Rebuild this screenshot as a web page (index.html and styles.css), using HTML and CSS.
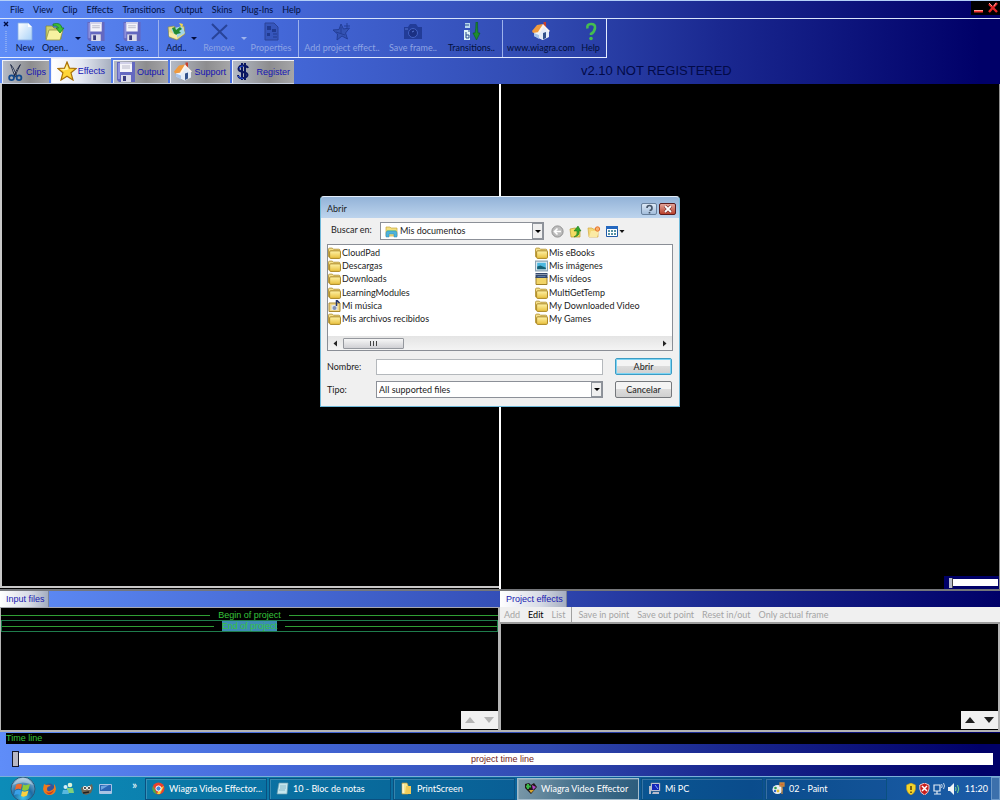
FILE: index.html
```html
<!DOCTYPE html>
<html lang="en">
<head>
<meta charset="utf-8">
<title>Wiagra Video Effector</title>
<link rel="stylesheet" href="styles.css">
</head>
<body>
<svg class="defs" aria-hidden="true">
  <defs>
    <linearGradient id="gFolder" x1="0" y1="0" x2="0" y2="1"><stop offset="0" stop-color="#fff3a8"/><stop offset="1" stop-color="#e8bf3c"/></linearGradient>
    <linearGradient id="gPage" x1="0" y1="0" x2="1" y2="1"><stop offset="0" stop-color="#fff"/><stop offset="1" stop-color="#a9d2f8"/></linearGradient>
    <radialGradient id="gOrb" cx=".5" cy=".85" r=".8"><stop offset="0" stop-color="#3fc3ee"/><stop offset=".5" stop-color="#1c6ba4"/><stop offset="1" stop-color="#8fb6d0"/></radialGradient>
  </defs>
  <symbol id="folder" viewBox="0 0 12 11"><path d="M.5 9V2q0-1 1-1H4l1 1h5q1 0 1 1v6z" fill="#f5e08a" stroke="#b08f2c" stroke-width=".8"/><path d="M2.500 3.500h8q1 0 1 1v5q0 1-1 1h-8q-1 0-1-1v-5q0-1 1-1z" fill="url(#gFolder)" stroke="#a98522" stroke-width=".9"/></symbol>
  <symbol id="floppy" viewBox="0 0 18 20"><path d="M0 0h18v20H2l-2-2z" fill="#6468c0"/><path d="M1 1h2v16H1z" fill="#8c90dc"/><path d="M3 0h12v10H3z" fill="#f4f4fa"/><path d="M3 0h12v2H3z" fill="#d0d0e8"/><path d="M5 4h8M5 6h8" stroke="#b8b8c8"/><path d="M4 13h10v7H4z" fill="#dcdce8"/><path d="M6 14h3v5H6z" fill="#3a3c80"/></symbol>
  <symbol id="house" viewBox="0 0 18 19"><path d="M11.500 0H14v6h-2.500z" fill="#c8402c"/><path d="M2 9l5-5 4 5v9l-9-4z" fill="#eef3fb"/><path d="M0 9l5-6 6-1-4 8-6 1z" fill="#f09a3e"/><path d="M7 10l5-6 5 5v6l-6 3-4-2z" fill="#e4ecf8"/><path d="M11 2l7 7-1.500 1L12 5l-4.500 6L6 10z" fill="#fdf4ea"/><path d="M11 11l3-1v6l-3 1.500z" fill="#33528c"/><path d="M2 11l5 2v4l-5-3z" fill="#a9c4ea"/></symbol>
  <symbol id="star" viewBox="0 0 20 20"><path d="M10 1l2.500 6.200 6.700.3-5.200 4.300L16 19l-6-3.800L4 19l1.900-7.200L.8 7.500l6.700-.3z" fill="#ffd637" stroke="#a87008" stroke-width="1.200"/><path d="M10 3.500l1.500 5-5 1-3.500-1.200 5-.3z" fill="#fff3a0"/></symbol>
</svg>

<div class="app">
  <header class="head">
    <nav class="menubar">
      <a href="#">File</a><a href="#">View</a><a href="#">Clip</a><a href="#">Effects</a><a href="#">Transitions</a><a href="#">Output</a><a href="#">Skins</a><a href="#">Plug-Ins</a><a href="#">Help</a>
      <div class="wincontrols">
        <button aria-label="Minimize"><svg width="10" height="12" viewBox="0 0 10 12"><path d="M0 8.500h9v2H0z" fill="#f03030"/><path d="M0 8h9v1H0z" fill="#ff9a90"/></svg></button>
        <button aria-label="Close"><svg width="10" height="12" viewBox="0 0 10 12"><path d="M1 2l8 8M9 1L1 10" stroke="#e02828" stroke-width="2.400"/><path d="M1 1l3 3M8 1L6 4" stroke="#ff9a90"/></svg></button>
      </div>
    </nav>
    <div class="toolbar">
      <div class="grip"><svg width="6" height="36" viewBox="0 0 6 36"><path d="M1 3l4 4M5 3L1 7" stroke="#000c40" stroke-width="1.400"/><path d="M3 12v21" stroke="#88aaf4" stroke-width="2" stroke-dasharray="1 1"/></svg></div>
      <button class="tool w-new"><svg width="16" height="19" viewBox="0 0 16 19"><path d="M1 1h10l4 4v13H1z" fill="url(#gPage)" stroke="#88aee6" stroke-width=".8"/><path d="M11 1v4h4z" fill="#fff"/></svg>New</button>
      <button class="tool w-open"><svg width="20" height="19" viewBox="0 0 20 19"><path d="M1 4h6l2 2h7v11H1z" fill="#cfd06c" stroke="#858a38" stroke-width=".8"/><path d="M4 8h14l-3 10H1z" fill="#f6f1a0" stroke="#929444" stroke-width=".8"/><path d="M8 2q8-2 9 4h2l-4 5-4-5h2.500q-1-3-5.500-2z" fill="#3fbd34" stroke="#117a18" stroke-width=".7"/></svg>Open..</button>
      <button class="drop" aria-label="Open options"></button>
      <button class="tool w-save"><svg width="18" height="19"><use href="#floppy"/></svg>Save</button>
      <button class="tool w-saveas"><svg width="18" height="19"><use href="#floppy"/></svg>Save as..</button>
      <span class="sep"></span>
      <button class="tool w-add"><svg width="19" height="19" viewBox="0 0 19 19"><path d="M1 5l6-1 2 2 8-2 1 8-8 6-8-3z" fill="#e9d98a" stroke="#7f8a5c" stroke-width=".7"/><path d="M4 7l11-3 3 7-9 5z" fill="#9fd5e8"/><path d="M5 6l3-1 1 3 4-3 2 2-3 2 2 2-4 1-1 2-2-3z" fill="#238a32"/><path d="M12 1l4 1-1 4z" fill="#f3d74c"/><path d="M2 10l8 3v4l-8-3z" fill="#f7eba8"/></svg>Add..</button>
      <button class="drop" aria-label="Add options"></button>
      <button class="tool w-remove" disabled><svg width="19" height="19" viewBox="0 0 19 19"><path d="M2 2l15 15M17 3L2 17" stroke="#284399" stroke-width="2"/></svg>Remove</button>
      <button class="drop" aria-label="Remove options" disabled></button>
      <button class="tool w-prop" disabled><svg width="17" height="19" viewBox="0 0 17 19"><path d="M2 1h9l4 4v13H2z" fill="#3656bc" stroke="#2a4298"/><path d="M4 4h4v4H4zM4 11h3v3H4zM9 7h4v3H9z" fill="#203a90"/><path d="M10 12h4M10 15h4" stroke="#203a90"/></svg>Properties</button>
      <span class="sep"></span>
      <button class="tool w-effect" disabled><svg width="20" height="19" viewBox="0 0 20 19"><path d="M9 2l2.500 5 6-1-4 5 2 6-5.500-3L5 18l.5-6L1 8l6-.5z" fill="#3453b4" stroke="#233e98"/><path d="M15 1v6M12 4h6M4 10l9 3M9 5v7" stroke="#233e98"/></svg>Add project effect..</button>
      <button class="tool w-frame" disabled><svg width="20" height="19" viewBox="0 0 20 19"><path d="M1 5h4l2-3h6l2 3h4v12H1z" fill="#223c98"/><circle cx="10" cy="11" r="4.500" fill="#1b3082" stroke="#4262c4"/><path d="M2 7h3M9 10l2-1" stroke="#5675d0"/></svg>Save frame..</button>
      <button class="tool w-trans"><svg width="18" height="19" viewBox="0 0 18 19"><path d="M2 1h5v5H2z" fill="#b8d8ec"/><path d="M1 8h6v10H1z" fill="#e0f4f8"/><path d="M2 3h4M3 10v6h3v-3H3M5 9h2" stroke="#244b8c" fill="none"/><path d="M13 0h1.500q0 7 .5 11h2l-3.500 7L10 11h2q1-4 1-11z" fill="#1e8b2f" stroke="#0c5824" stroke-width=".6"/></svg>Transitions..</button>
      <span class="sep"></span>
      <button class="tool w-www"><svg width="18" height="19"><use href="#house"/></svg>www.wiagra.com</button>
      <button class="tool w-help"><svg width="12" height="19" viewBox="0 0 12 19"><path d="M2.500 6.500Q1.500 2 6 2t4 4-4 6v1" fill="none" stroke="#45bd50" stroke-width="2.600"/><circle cx="6" cy="16.500" r="1.800" fill="#45bd50"/></svg>Help</button>
    </div>
    <div class="tabrow">
      <div class="tabs">
        <button class="tab t-clips"><svg width="15" height="19" viewBox="0 0 17 20"><path d="M3 1l3 4 4 9-2 1zM14 1l-4 6-4 8 1 1z" fill="#dfe6ee" stroke="#17213f" stroke-width="1"/><circle cx="4" cy="16" r="2.700" fill="none" stroke="#124a8e" stroke-width="2"/><circle cx="12.500" cy="16" r="2.700" fill="none" stroke="#124a8e" stroke-width="2"/></svg>Clips</button>
        <button class="tab t-effects active"><svg width="20" height="20"><use href="#star"/></svg>Effects</button>
        <button class="tab t-output"><svg width="18" height="20"><use href="#floppy"/></svg>Output</button>
        <button class="tab t-support"><svg width="18" height="20"><use href="#house"/></svg>Support</button>
        <button class="tab t-register"><svg width="14" height="20" viewBox="0 0 14 20"><path d="M12 6Q11 3.500 7 3.500T2.500 7q0 2 4.500 3t4.500 3-4.500 3-5-3M6 1v17M9 1v17" fill="none" stroke="#0a1660" stroke-width="2"/><path d="M3 6q1-2 4-2M2 14q2 2.500 5 2.500" stroke="#2450e0" fill="none"/></svg>Register</button>
      </div>
      <div class="version">v2.10 NOT REGISTERED</div>
    </div>
  </header>

  <main class="previews">
    <section class="preview"></section>
    <section class="preview right">
      <input class="volume" type="range" min="0" max="100" value="0" aria-label="Volume">
    </section>
    <div class="overlay">
      <form class="dialog" role="dialog" aria-label="Abrir" onsubmit="return false">
        <div class="titlebar"><span>Abrir</span>
          <button type="button" class="tb help" aria-label="Ayuda"><svg width="9" height="10" viewBox="0 0 9 10"><path d="M2 4Q2 1.500 4.500 1.500T7 4 4.500 6.500M4.500 8v1.500" fill="none" stroke="#445468" stroke-width="1.600"/></svg></button>
          <button type="button" class="tb close" aria-label="Cerrar"><svg width="10" height="8" viewBox="0 0 10 8"><path d="M2 1l6 6M8 1L2 7" stroke="#6a2424" stroke-width="3"/><path d="M2 1l6 6M8 1L2 7" stroke="#fff" stroke-width="1.800"/></svg></button>
        </div>
        <div class="lookin">
          <label for="look">Buscar en:</label>
          <div class="combo icon">
            <select id="look"><option>Mis documentos</option></select>
            <svg class="lead" width="13" height="13" viewBox="0 0 13 13"><path d="M1 2h4l1 1h6v8H1z" fill="#f2df80" stroke="#c6a83c" stroke-width=".7"/><path d="M2 5h9v4H2z" fill="#9fd97a"/><path d="M1 12V8q0-2 2-2h7q2 0 2 2v4H9V9H4v3z" fill="#4cb4dc" stroke="#2c86b4" stroke-width=".5"/></svg>
            <span class="arrow"></span>
          </div>
          <div class="navicons">
            <button type="button" aria-label="Atrás"><svg width="13" height="13" viewBox="0 0 13 13"><circle cx="6.500" cy="6.500" r="5.600" fill="#bcbcbc" stroke="#909090"/><path d="M10 6.500H4M6.500 3.500l-3 3 3 3" fill="none" stroke="#fff" stroke-width="1.600"/></svg></button>
            <button type="button" aria-label="Subir un nivel"><svg width="13" height="13" viewBox="0 0 13 13"><path d="M1 4l5-1 5 2v7H2z" fill="#f3dc62" stroke="#bb9828" stroke-width=".7"/><path d="M5 12q4-2 3-6H5l4-5 3 5h-2q1 5-5 6z" fill="#35a52c" stroke="#13701a" stroke-width=".5"/></svg></button>
            <button type="button" aria-label="Nueva carpeta"><svg width="14" height="13" viewBox="0 0 14 13"><path d="M1 3h4l1 1h5v8H2z" fill="#f3d878" stroke="#d2a840" stroke-width=".7"/><path d="M4 6h8l-2 6H2z" fill="#fbeaa4"/><circle cx="10.500" cy="4" r="2.200" fill="#f8b070" stroke="#e8742c"/></svg></button>
            <button type="button" aria-label="Vistas"><svg width="19" height="13" viewBox="0 0 19 13"><path d="M.5 1.500h11v10H.5z" fill="#fff" stroke="#1e58a8"/><path d="M0 1h12v3H0z" fill="#2468c0"/><path d="M2 6h2M5 6h2M8 6h2M2 9h2M5 9h2M8 9h2" stroke="#207088" stroke-width="1.600"/><path d="M13.500 5h5L16 8z" fill="#111"/></svg></button>
          </div>
        </div>
        <div class="filebox">
          <ul class="files">
            <li><svg><use href="#folder"/></svg>CloudPad</li>
            <li><svg><use href="#folder"/></svg>Descargas</li>
            <li><svg><use href="#folder"/></svg>Downloads</li>
            <li><svg><use href="#folder"/></svg>LearningModules</li>
            <li><svg viewBox="0 0 12 12"><path d="M.5 3h11v8.500H.5z" fill="#f0d78a" stroke="#aa8930"/><path d="M3 5h6v5H3z" fill="#dfe6f0"/><circle cx="6" cy="8" r="2" fill="#8090b8"/><path d="M8 6V0l3 3" fill="none" stroke="#24346c" stroke-width="1.500"/></svg>Mi música</li>
            <li><svg><use href="#folder"/></svg>Mis archivos recibidos</li>
            <li><svg><use href="#folder"/></svg>Mis eBooks</li>
            <li><svg viewBox="0 0 12 11"><path d="M.5 1h11v9H.5z" fill="#e4eef4" stroke="#8ca4b4"/><path d="M2 2.500h8v6H2z" fill="#4cb8e0"/><path d="M2 6l3-1 5 2v1.500H2z" fill="#146074"/></svg>Mis imágenes</li>
            <li><svg viewBox="0 0 12 12"><path d="M.5 4h11v7.500H.5z" fill="#f1d468" stroke="#a08028"/><path d="M0 0h12v5H0z" fill="#34486c"/><path d="M0 1.500h12" stroke="#dfe4ea" stroke-dasharray="1 1"/><path d="M2 3h8v1H2z" fill="#5978a8"/></svg>Mis vídeos</li>
            <li><svg><use href="#folder"/></svg>MultiGetTemp</li>
            <li><svg><use href="#folder"/></svg>My Downloaded Video</li>
            <li><svg><use href="#folder"/></svg>My Games</li>
          </ul>
          <div class="hscroll">
            <svg width="14" height="13" viewBox="0 0 14 13"><path d="M9 3.500v6l-3.500-3z" fill="#222"/></svg>
            <span class="thumb"><i></i><i></i><i></i></span>
            <span class="fill"></span>
            <svg width="14" height="13" viewBox="0 0 14 13"><path d="M5 3.500v6l3.500-3z" fill="#222"/></svg>
          </div>
        </div>
        <div class="fields">
          <label for="fname">Nombre:</label>
          <input id="fname" type="text">
          <button type="submit" class="btn default">Abrir</button>
          <label for="ftype">Tipo:</label>
          <div class="combo">
            <select id="ftype"><option>All supported files</option></select>
            <span class="arrow"></span>
          </div>
          <button type="button" class="btn">Cancelar</button>
        </div>
      </form>
    </div>
  </main>

  <div class="panels">
    <section class="panel">
      <div class="ptabs dimleft"><button class="ptab">Input files</button></div>
      <div class="plist">
        <div class="prow"><span>Begin of project</span></div>
        <div class="prow selected"><span>End of project</span></div>
        <div class="updown off"><button aria-label="Move up" disabled></button><button class="down" aria-label="Move down" disabled></button></div>
      </div>
    </section>
    <section class="panel">
      <div class="ptabs dimright"><button class="ptab">Project effects</button></div>
      <div class="etools"><button disabled>Add</button><button>Edit</button><button disabled>List</button><span class="esep"></span><button disabled>Save in point</button><button disabled>Save out point</button><button disabled>Reset in/out</button><button disabled>Only actual frame</button></div>
      <div class="plist">
        <div class="updown"><button aria-label="Move up"></button><button class="down" aria-label="Move down"></button></div>
      </div>
    </section>
  </div>

  <section class="timeline">
    <label for="time">Time line</label>
    <div class="track">
      <input id="time" type="range" min="0" max="100" value="0">
      <span>project time line</span>
    </div>
  </section>

  <footer class="taskbar">
    <button class="start" aria-label="Inicio"><svg width="26" height="24" viewBox="0 0 26 24"><circle cx="13" cy="12" r="12" fill="url(#gOrb)" stroke="#2b5a7c"/><path d="M6 8q3-2 6-.5l-1 5Q8 11 5 13z" fill="#ee6a2c"/><path d="M13 7.500q3 1.500 7-.5l-1.500 5.500q-3 2-6.500.500z" fill="#8ccb3a"/><path d="M5 14q3-2 6-.5l-1 4.500q-3-1.500-6 .5z" fill="#3aa0e8"/><path d="M12 14q3 1.500 6.500-.5L17 18.500q-3 2-6 .500z" fill="#fbd040"/><path d="M3 8Q7 1 13 1t10 7q-10-5-20 0z" fill="#fff" opacity=".35"/></svg></button>
    <div class="quick">
      <button aria-label="Firefox"><svg width="13" height="13" viewBox="0 0 13 13"><circle cx="6.500" cy="6.500" r="5" fill="#34559c"/><path d="M1 2l2 1q3-1 5 1-4 0-4 3t3 2 4-3V2q2 2 2 5-1 6-6.500 6T0 7z" fill="#ee7a1c"/><path d="M2 9q4 4 9-1-2 5-6 4z" fill="#c8381c"/></svg></button>
      <button aria-label="Messenger"><svg width="12" height="13" viewBox="0 0 12 13"><circle cx="8" cy="3" r="2.300" fill="#dff4d8"/><path d="M5 6h6l1 5H5z" fill="#7fd07c"/><circle cx="3.500" cy="5" r="2" fill="#d0ecf8"/><path d="M1 8h5l1 4H0z" fill="#57b8e0"/></svg></button>
      <button aria-label="GIMP"><svg width="13" height="12" viewBox="0 0 13 12"><path d="M1 5l3-2 3 1 5-3 1 4-2 5-5 2-4-2z" fill="#6f6552"/><circle cx="5" cy="5" r="2" fill="#fff"/><circle cx="9" cy="5" r="2" fill="#fff"/><circle cx="5" cy="5" r=".9"/><circle cx="9" cy="5" r=".9"/><path d="M3 10l6-1" stroke="#222" stroke-width="1.500"/></svg></button>
      <button aria-label="Escritorio"><svg width="13" height="12" viewBox="0 0 13 12"><path d="M.5 1.500h12v9H.5z" fill="#2864b4" stroke="#a8c4e4"/><path d="M1 9h11" stroke="#d4e4f4" stroke-width="1.500"/><path d="M2 3l8-1-8 5z" fill="#6ca4e0"/></svg></button>
    </div>
    <span class="chev">»</span>
    <div class="tasks">
      <button><svg width="13" height="13" viewBox="0 0 13 13"><circle cx="6.500" cy="6.500" r="6" fill="#e8402c"/><path d="M1 4l4 8Q0 11 .5 6z" fill="#4cae48"/><path d="M12 4l-4 8 -3 0 3-6z" fill="#f8d038"/><circle cx="6.500" cy="6.500" r="2.600" fill="#4488dc" stroke="#fff"/></svg><span>Wiagra Video Effector...</span></button>
      <button><svg width="13" height="13" viewBox="0 0 13 13"><path d="M3 1h9l-1 11H1z" fill="#c4e6ee" stroke="#6b9cac" stroke-width=".7"/><path d="M4 4h6M4 6h6M3 8h6" stroke="#7cb0c0" stroke-width=".8"/></svg><span>10 - Bloc de notas</span></button>
      <button><svg width="13" height="13" viewBox="0 0 13 13"><path d="M2 1h5l1 2v9H2z" fill="#f6e690" stroke="#b8963c" stroke-width=".7"/><path d="M6 4h5v8H5z" fill="#f0ca58"/><path d="M3 2v9" stroke="#fff"/></svg><span>PrintScreen</span></button>
      <button class="current"><svg width="13" height="13" viewBox="0 0 13 13"><path d="M1 2l4-1 2 2 3-2 3 4-6 7-6-6z" fill="#201818"/><path d="M4 2v5M2 4.500h5" stroke="#38b848" stroke-width="2"/><path d="M8 3l4 2-3 3z" fill="#b048c8"/><path d="M5 8h5l-3 3z" fill="#d8a830"/></svg><span>Wiagra Video Effector</span></button>
      <button><svg width="13" height="13" viewBox="0 0 13 13"><path d="M3 1h9v8H3z" fill="#d8dce8" stroke="#7880a0" stroke-width=".6"/><path d="M4 2h7v6H4z" fill="#1424b8"/><path d="M7 3l3 4" stroke="#88a8ff"/><path d="M1 4h2v8H1zM5 10h6v2H4z" fill="#b8bccc"/></svg><span>Mi PC</span></button>
      <button><svg width="13" height="13" viewBox="0 0 13 13"><ellipse cx="5.500" cy="7.500" rx="5" ry="4.500" fill="#e8eef4"/><circle cx="3.500" cy="6" r="1.300" fill="#30a048"/><circle cx="6" cy="9" r="1.400" fill="#e0c030"/><circle cx="3" cy="9" r="1.200" fill="#3068d0"/><path d="M8 1h4v3h-4zM10 4v8" fill="#d06830" stroke="#c88840" stroke-width="1.300"/></svg><span>02 - Paint</span></button>
    </div>
    <div class="tray">
      <svg width="10" height="12" viewBox="0 0 10 12"><path d="M5 0l4.500 2v4Q9 10 5 12 1 10 .5 6V2z" fill="#f4d42c" stroke="#b8901c" stroke-width=".6"/><path d="M5 3v4M5 8.500v1.500" stroke="#4a3400" stroke-width="1.400"/></svg>
      <svg width="11" height="12" viewBox="0 0 11 12"><path d="M5.500 0L10 2v4q-.5 4-4.500 6Q1 10 .8 6V2z" fill="#c81e1e" stroke="#f0c4c4"/><path d="M3 3l5 5M8 3L3 8" stroke="#fff" stroke-width="1.500"/></svg>
      <svg width="12" height="12" viewBox="0 0 12 12"><path d="M1 2h6v6H1zM1 11h7M4 8v3" fill="none" stroke="#e4ecf4" stroke-width="1.200"/><path d="M8.500 1q1.500 2 0 4M10.500 0q2 3 0 6" fill="none" stroke="#d4e0ec" stroke-width=".9"/></svg>
      <svg width="12" height="12" viewBox="0 0 12 12"><path d="M0 4h2l4-4v12L2 8H0z" fill="#f0f4f8"/><path d="M7.500 4q1 2 0 4M9.500 2q2.500 4 0 8" fill="none" stroke="#7cdc88"/></svg>
      <time>11:20</time>
      <button class="desk" aria-label="Mostrar escritorio"></button>
    </div>
  </footer>
</div>
</body>
</html>
```
FILE: styles.css
```css
:root {
  --ui: Lato, "Noto Sans", sans-serif;
  --sans: "Liberation Sans", Arial, sans-serif;
  --sky: linear-gradient(90deg, #5f8df8 0, #4468d8 28%, #3049b0 55%, #1a2890 72%, #000068 98%);
}
* { box-sizing: border-box; }
body { margin: 0; background: #000; font: 9px/12px var(--ui); }
button, select, input { font: inherit; margin: 0; padding: 0; border: 0; background: none; color: inherit; border-radius: 0; outline: 0; }
svg { display: block; flex: none; }
a { color: inherit; text-decoration: none; }
.defs { position: absolute; width: 0; height: 0; }
.app { display: flex; flex-direction: column; min-height: 100vh; }

/* header */
.head { background: var(--sky); border-top: 1px solid #b4d0f8; color: #02103c; }
.menubar { display: flex; align-items: center; gap: 9px; height: 18px; padding-left: 10px; border-bottom: 1px solid #d8e4fc; }
.wincontrols { display: flex; gap: 4px; margin-left: auto; align-self: flex-start; padding: 1px 2px 1px 3px; background: #000; }
.toolbar { display: flex; width: fit-content; height: 39px; border: solid #e4ecff; border-width: 0 1px 1px 0; }
.grip { width: 14px; padding-left: 3px; }
.tool { display: flex; flex-direction: column; align-items: center; gap: 1px; padding-top: 3px; white-space: nowrap; }
.tool:disabled { color: #8ea4e4; }
.w-new { width: 22px; }
.w-open { width: 38px; }
.w-save { width: 28px; }
.w-saveas { width: 44px; }
.w-add { width: 27px; }
.w-remove { width: 42px; }
.w-prop { width: 46px; }
.w-effect { width: 78px; }
.w-frame { width: 64px; }
.w-trans { width: 53px; }
.w-www { width: 68px; }
.w-help { width: 31px; }
.drop { width: 8px; display: flex; align-items: center; justify-content: center; }
.drop::before { content: ""; border: solid transparent; border-width: 3px 3px 0; border-top-color: #020c3c; }
.drop:disabled::before { border-top-color: #9fb4ec; }
.sep { width: 1px; margin: 1px 4px 0; background: #9db2ec; }
.tabrow { display: flex; align-items: center; height: 26px; }
.tabs { display: flex; align-items: flex-end; align-self: stretch; gap: 2px; padding-left: 2px; border-bottom: 1px solid #c8d0e0; }
.tab { display: flex; align-items: center; justify-content: space-between; height: 23px; padding: 0 4px 0 3px; border: solid #f0f2f8; border-width: 1px 0 0 1px; background: linear-gradient(90deg, #b4bac6, #8d8d8f 60%, #a6a6a8); color: #1414b4; font-family: var(--sans); }
.tab.active { height: 25px; padding: 0 6px 0 5px; background: linear-gradient(90deg, #fff, #e4e8f2 50%, #a8b0c0); }
.tab.t-clips { width: 47px; padding: 0 3px 0 5px; }
.t-effects { width: 60px; }
.t-output { width: 55px; }
.t-support { width: 60px; }
.t-register { width: 62px; }
.version { margin-left: auto; width: 419px; font: 13px/16px var(--sans); color: #020a48; }

/* previews and the file dialog */
.previews { position: relative; flex: 1; display: grid; grid-template-columns: 1fr 1fr; min-height: 300px; border-bottom: 2px solid #74767a; }
.preview { border: 1px solid #c8c8c8; border-width: 0 0 2px 2px; margin-bottom: 1px; }
.preview.right { display: flex; align-items: flex-end; justify-content: flex-end; border-width: 0 1px 0 2px; margin: 0 0 0 -1px; border-left-color: #fff; border-right-color: #909090; }
.volume { appearance: none; width: 55px; height: 13px; padding: 3px 1px 3px 5px; background: #000068; }
.volume::-webkit-slider-runnable-track { height: 7px; background: #fff; }
.volume::-webkit-slider-thumb { appearance: none; width: 4px; height: 10px; margin-top: -1px; background: #b8bcc8; border-right: 1px solid #444; }
.overlay { position: absolute; inset: 0; display: flex; justify-content: center; align-items: flex-start; padding-top: 112px; }
.dialog { width: 360px; border: 1px solid #6fb8d8; border-top-color: #e4eefa; border-radius: 4px 4px 0 0; background: #f0f0f0; padding: 0 6px 8px; color: #1c1c1c; }
.titlebar { display: flex; align-items: center; gap: 2px; height: 21px; margin: 0 -6px; padding: 2px 3px 0 6px; background: linear-gradient(#93b3d8, #bdd4ed); border-radius: 3px 3px 0 0; }
.titlebar span { flex: 1; }
.tb { display: flex; align-items: center; justify-content: center; width: 16px; height: 12px; border: 1px solid #68809c; border-radius: 2px; background: linear-gradient(#dce8f6, #a4bedc); }
.tb.close { width: 17px; border-color: #5c1c1c; background: linear-gradient(#e4a498, #b8402c); }
.lookin { display: flex; align-items: center; padding: 4px 0 4px 4px; }
.lookin label { width: 49px; padding-bottom: 2px; }
.combo { position: relative; display: flex; height: 17px; border: 1px solid #8c9098; background: #fff; }
.combo select { appearance: none; flex: 1; padding-left: 2px; }
.combo.icon { width: 164px; height: 18px; }
.combo.icon select { padding-left: 19px; }
.lead { position: absolute; left: 4px; top: 2px; }
.arrow { position: absolute; right: 0; top: 0; bottom: 0; width: 11px; display: flex; align-items: center; justify-content: center; border: 1px solid #90959c; background: #f0f0f0; pointer-events: none; }
.arrow::before { content: ""; border: solid transparent; border-width: 3px 3px 0; border-top-color: #000; }
.navicons { display: flex; gap: 5px; padding-left: 7px; }
.filebox { border: 1px solid #8a8e96; background: #fff; }
.files { display: grid; grid-auto-flow: column; grid-template: repeat(6, 1fr) / 207px 1fr; height: 80px; margin: 1px 0 10px; padding: 0; list-style: none; }
.files li { display: flex; align-items: center; gap: 1px; white-space: nowrap; }
.files svg { width: 13px; height: 12px; }
.hscroll { display: flex; align-items: center; height: 14px; background: linear-gradient(#e4e4e4, #f4f4f4); }
.thumb { display: flex; align-items: center; justify-content: center; gap: 1px; width: 61px; height: 11px; margin-left: 1px; border: 1px solid #95989e; border-radius: 1px; background: linear-gradient(#f6f6f6, #d0d0d4); }
.thumb i { width: 2px; height: 5px; border-left: 1px solid #444; }
.fill { flex: 1; }
.fields { display: grid; grid-template-columns: 49px 1fr 57px; align-items: center; row-gap: 6px; padding: 7px 1px 0 0; }
.fields input { height: 16px; border: 1px solid #b4b8bc; background: #fff; padding: 0 2px; }
.fields input, .fields .combo { margin-right: 12px; }
.btn { height: 17px; border: 1px solid #75787c; border-radius: 2px; background: linear-gradient(#f4f4f4 45%, #dcdcdc 50%, #d0d0d0); }
.btn.default { border-color: #3c9cc4; box-shadow: inset 0 0 0 1px #7cd4f4; }

/* bottom panels */
.panels { display: grid; grid-template-columns: 1fr 1fr; min-height: 141px; }
.panel { display: flex; flex-direction: column; min-width: 0; }
.ptabs { display: flex; height: 16px; }
.dimleft { background: linear-gradient(90deg, #5f8df8, #344fb8); border-bottom: 1px solid #a8a8b0; height: 17px; }
.dimright { background: linear-gradient(90deg, #344fb8, #1a2890 45%, #000068); }
.ptab { padding: 0 3px 0 6px; border-right: 1px solid #7c8498; background: linear-gradient(90deg, #fff, #d8dce6 60%, #a4adc0); color: #1818b0; font-family: var(--sans); }
.etools { display: flex; align-items: center; gap: 8px; height: 17px; padding-left: 4px; background: #f0f0f0; border-bottom: 2px solid #9c9c9c; color: #000; white-space: nowrap; }
.etools button:disabled { color: #a4a4a4; }
.esep { align-self: stretch; width: 1px; background: #a0a0a0; margin: 0 -2px 0 -2px; }
.plist { position: relative; flex: 1; border: solid #b4b4b4; border-width: 0 2px 2px 1px; background: #000; color: #36c43c; font-family: var(--sans); }
.prow { display: flex; align-items: center; gap: 8px; height: 12px; margin-top: 1px; line-height: 10px; }
.prow::before, .prow::after { content: ""; flex: 1; height: 1px; background: #2f9e34; }
.prow.selected { height: 12px; margin-top: -1px; border: 1px solid #1f7c4c; }
.prow.selected span { background: #3c8cb4; }
.updown { position: absolute; right: 0; bottom: 1px; display: flex; width: 37px; height: 18px; background: #f0f0f0; }
.updown button { flex: 1; display: flex; align-items: center; justify-content: center; }
.updown button::before { content: ""; border: solid transparent; border-width: 0 5px 6px; border-bottom-color: #202020; }
.updown .down::before { border-width: 6px 5px 0; border-top-color: #202020; }
.updown.off button::before { border-bottom-color: #b4b4b4; }
.updown.off .down::before { border-top-color: #b4b4b4; }

/* timeline */
.timeline { background: var(--sky); padding: 1px 0 9px 6px; font-family: var(--sans); }
.timeline label { display: block; background: #000; color: #36c43c; line-height: 11px; }
.track { position: relative; display: flex; justify-content: center; margin: 7px 7px 0 6px; }
.track input { appearance: none; width: 100%; height: 16px; }
.track input::-webkit-slider-runnable-track { height: 12px; background: #fff; }
.track input::-webkit-slider-thumb { appearance: none; width: 7px; height: 16px; margin-top: -2px; background: #b8b8c4; border: 1px solid #14182c; }
.track span { position: absolute; top: 2px; color: #701818; pointer-events: none; }

/* taskbar */
.taskbar { display: flex; align-items: center; height: 24px; border-top: 1px solid #7cb0d8; background: linear-gradient(90deg, #0c8cb8, #0b6ea0 40%, #0c4f90 75%, #1c5ca8); color: #fff; }
.start { padding-left: 10px; }
.quick { display: flex; gap: 6px; padding-left: 7px; }
.chev { width: 13px; margin-left: 20px; margin-bottom: 8px; font-size: 12px; }
.tasks { flex: 1; display: flex; gap: 2px; height: 22px; max-width: 742px; }
.tasks button { flex: 1; min-width: 0; display: flex; align-items: center; gap: 4px; padding: 0 6px; border: 1px solid #0a5080; box-shadow: inset 1px 1px 0 #ffffff30; white-space: nowrap; background: #00386818; }
.tasks .current { background: linear-gradient(100deg, #7a98a8, #44708c 50%, #2c5c7c); border-color: #a4bccc; }
.tray { display: flex; align-items: center; gap: 3px; margin-left: auto; }
.tray time { margin-left: 2px; }
.desk { width: 9px; height: 23px; border: 1px solid #6c98c8; background: #3c70ac; }
```
